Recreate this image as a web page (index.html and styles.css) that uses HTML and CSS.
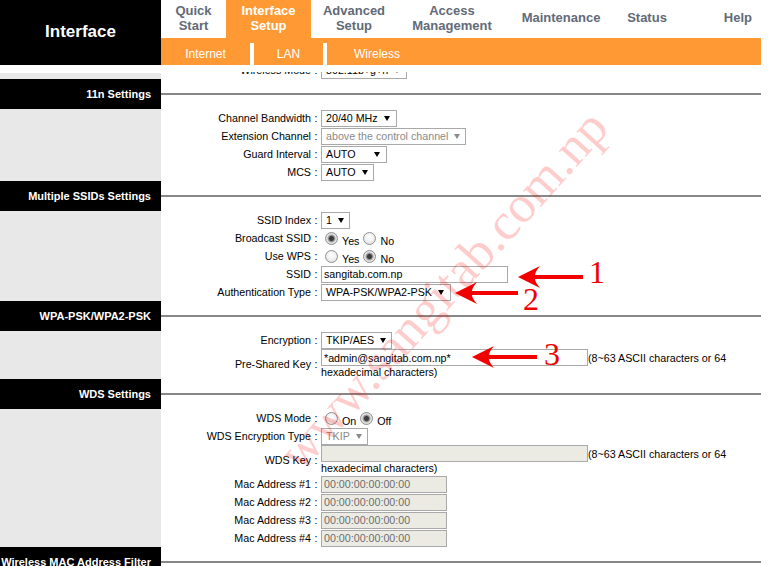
FILE: index.html
```html
<!DOCTYPE html>
<html>
<head>
<meta charset="utf-8">
<title>Interface Setup - Wireless</title>
<link rel="stylesheet" href="styles.css">
</head>
<body>
<div class="page">
  <header class="top">
    <div class="brand">Interface</div>
    <nav class="nav">
      <ul class="tabs">
        <li class="tab t1">Quick<br>Start</li>
        <li class="tab t2 active">Interface<br>Setup</li>
        <li class="tab t3">Advanced<br>Setup</li>
        <li class="tab t4">Access<br>Management</li>
        <li class="tab t5">Maintenance</li>
        <li class="tab t6">Status</li>
        <li class="tab t7">Help</li>
      </ul>
      <ul class="subtabs">
        <li class="sub s1">Internet</li>
        <li class="sep"></li>
        <li class="sub s2">LAN</li>
        <li class="sep"></li>
        <li class="sub s3">Wireless</li>
      </ul>
    </nav>
  </header>

  <div class="viewport">
    <div class="scroll">
      <div class="sec-body">
        <div class="side partial"></div>
        <div class="rows">
          <div class="row"><span class="lbl">Wireless Mode</span><span class="colon">:</span><span class="ctl"><span class="sel w86">802.11b+g+n</span></span></div>
        </div>
      </div>

      <div class="sec-head"><div class="sh-label">11n Settings</div><div class="sh-rule"></div></div>
      <div class="sec-body">
        <div class="side"></div>
        <div class="rows">
          <div class="row"><span class="lbl">Channel Bandwidth</span><span class="colon">:</span><span class="ctl"><span class="sel w76">20/40 MHz</span></span></div>
          <div class="row"><span class="lbl">Extension Channel</span><span class="colon">:</span><span class="ctl"><span class="sel dis w145">above the control channel</span></span></div>
          <div class="row"><span class="lbl">Guard Interval</span><span class="colon">:</span><span class="ctl"><span class="sel w66">AUTO</span></span></div>
          <div class="row"><span class="lbl">MCS</span><span class="colon">:</span><span class="ctl"><span class="sel w53">AUTO</span></span></div>
        </div>
      </div>

      <div class="sec-head"><div class="sh-label">Multiple SSIDs Settings</div><div class="sh-rule"></div></div>
      <div class="sec-body">
        <div class="side"></div>
        <div class="rows">
          <div class="row"><span class="lbl">SSID Index</span><span class="colon">:</span><span class="ctl"><span class="sel w29">1</span></span></div>
          <div class="row"><span class="lbl">Broadcast SSID</span><span class="colon">:</span><span class="ctl"><input class="radio" type="radio" name="bc" checked><span class="rt">Yes</span><input class="radio" type="radio" name="bc"><span class="rt">No</span></span></div>
          <div class="row"><span class="lbl">Use WPS</span><span class="colon">:</span><span class="ctl"><input class="radio" type="radio" name="wps"><span class="rt">Yes</span><input class="radio" type="radio" name="wps" checked><span class="rt">No</span></span></div>
          <div class="row"><span class="lbl">SSID</span><span class="colon">:</span><span class="ctl"><input class="inp w187" type="text" value="sangitab.com.np"></span></div>
          <div class="row"><span class="lbl">Authentication Type</span><span class="colon">:</span><span class="ctl"><span class="sel w130">WPA-PSK/WPA2-PSK</span></span></div>
        </div>
      </div>

      <div class="sec-head"><div class="sh-label">WPA-PSK/WPA2-PSK</div><div class="sh-rule"></div></div>
      <div class="sec-body">
        <div class="side"></div>
        <div class="rows">
          <div class="row"><span class="lbl">Encryption</span><span class="colon">:</span><span class="ctl"><span class="sel w71">TKIP/AES</span></span></div>
          <div class="row tall"><span class="lbl">Pre-Shared Key</span><span class="colon">:</span>
            <div class="ctl-block">
              <div class="line1"><input class="inp w267" type="text" value="*admin@sangitab.com.np*"><span class="note">(8~63 ASCII characters or 64</span></div>
              <div class="line2">hexadecimal characters)</div>
            </div>
          </div>
        </div>
      </div>

      <div class="sec-head"><div class="sh-label">WDS Settings</div><div class="sh-rule"></div></div>
      <div class="sec-body">
        <div class="side"></div>
        <div class="rows">
          <div class="row"><span class="lbl">WDS Mode</span><span class="colon">:</span><span class="ctl"><input class="radio" type="radio" name="wds"><span class="rt">On</span><input class="radio" type="radio" name="wds" checked><span class="rt">Off</span></span></div>
          <div class="row"><span class="lbl">WDS Encryption Type</span><span class="colon">:</span><span class="ctl"><span class="sel dis w47">TKIP</span></span></div>
          <div class="row tall"><span class="lbl">WDS Key</span><span class="colon">:</span>
            <div class="ctl-block">
              <div class="line1"><input class="inp dis w267" type="text" value="" readonly><span class="note">(8~63 ASCII characters or 64</span></div>
              <div class="line2">hexadecimal characters)</div>
            </div>
          </div>
          <div class="row"><span class="lbl">Mac Address #1</span><span class="colon">:</span><span class="ctl"><input class="inp dis w126" type="text" value="00:00:00:00:00:00" readonly></span></div>
          <div class="row"><span class="lbl">Mac Address #2</span><span class="colon">:</span><span class="ctl"><input class="inp dis w126" type="text" value="00:00:00:00:00:00" readonly></span></div>
          <div class="row"><span class="lbl">Mac Address #3</span><span class="colon">:</span><span class="ctl"><input class="inp dis w126" type="text" value="00:00:00:00:00:00" readonly></span></div>
          <div class="row"><span class="lbl">Mac Address #4</span><span class="colon">:</span><span class="ctl"><input class="inp dis w126" type="text" value="00:00:00:00:00:00" readonly></span></div>
        </div>
      </div>

      <div class="sec-head"><div class="sh-label">Wireless MAC Address Filter</div><div class="sh-rule"></div></div>
    </div>
  </div>

  <div class="wm">www.sangitab.com.np</div>
  <svg class="arrows" width="780" height="566" viewBox="0 0 780 566" aria-hidden="true">
    <path transform="translate(518 277)" d="M0 0 Q10 -5 22 -11 Q17 -5 17 -2 H65 V2 H17 Q17 5 22 11 Q10 5 0 0Z"/>
    <path transform="translate(455 293)" d="M0 0 Q10 -5 22 -11 Q17 -5 17 -2 H63 V2 H17 Q17 5 22 11 Q10 5 0 0Z"/>
    <path transform="translate(472 357)" d="M0 0 Q10 -5 22 -11 Q17 -5 17 -2 H65 V2 H17 Q17 5 22 11 Q10 5 0 0Z"/>
  </svg>
  <span class="num n1">1</span>
  <span class="num n2">2</span>
  <span class="num n3">3</span>
</div>
</body>
</html>
```
FILE: styles.css
```css
* { box-sizing: border-box; margin: 0; padding: 0; }
body { margin: 0; background: #fff; font-family: "Liberation Sans", Arial, sans-serif; overflow: hidden; }
.page { position: relative; width: 780px; height: 566px; overflow: hidden; background: #fff; }

/* header */
.top { display: flex; width: 761px; height: 65px; margin-bottom: 7px; }
.brand { width: 161px; background: #000; color: #fff; font-weight: bold; font-size: 17px; display: flex; align-items: center; justify-content: center; padding-bottom: 1px; }
.nav { width: 600px; display: flex; flex-direction: column; }
.tabs { display: flex; height: 38px; list-style: none; }
.tab { display: flex; align-items: center; justify-content: center; text-align: center; font-weight: bold; font-size: 13px; line-height: 15px; color: #626a78; padding-bottom: 3px; white-space: nowrap; }
.tab.active { background: #ff9933; color: #fff; }
.t1 { width: 65px; }
.t2 { width: 85px; }
.t3 { width: 86px; }
.t4 { width: 110px; }
.t5 { width: 108px; }
.t6 { width: 64px; }
.t7 { width: 82px; justify-content: flex-end; padding-right: 9px; }
.subtabs { display: flex; align-items: flex-end; height: 27px; background: #ff9933; list-style: none; }
.sub { height: 22px; line-height: 20px; padding-top: 1px; text-align: center; color: #fff; font-size: 12px; }
.s1 { width: 89px; }
.s2 { width: 69px; }
.s3 { width: 100px; }
.sep { width: 4px; height: 22px; background: #fff; }

/* content */
.viewport { width: 761px; height: 494px; overflow: hidden; }
.scroll { margin-top: -11px; }
.sec-head { display: grid; grid-template-columns: 161px 600px; height: 30px; }
.sh-label { background: #000; color: #fff; font-weight: bold; font-size: 11px; display: flex; align-items: center; justify-content: flex-end; padding-right: 10px; white-space: nowrap; }
.sh-rule { display: flex; align-items: center; }
.sh-rule::before { content: ""; display: block; width: 100%; height: 2px; background: #888; }
.sec-body { display: grid; grid-template-columns: 161px 600px; }
.side { background: #e8e8e8; }
.side.partial { background: linear-gradient(to bottom, #fff 0, #fff 12px, #e8e8e8 12px); }
.rows { font-size: 10.7px; color: #000; }
.row { display: grid; grid-template-columns: 150px 10px 440px; align-items: center; height: 18px; }
.row.tall { height: 30px; }
.lbl { text-align: right; white-space: nowrap; }
.colon { text-align: center; }
.ctl { display: flex; align-items: center; height: 18px; }
.ctl-block { display: flex; flex-direction: column; }
.line1 { display: flex; align-items: center; height: 17px; }
.line2 { line-height: 13px; height: 13px; white-space: nowrap; }
.note { white-space: nowrap; }

/* select look-alike */
.sel { display: flex; align-items: center; justify-content: space-between; height: 17px; border: 1px solid #a9a9a9; background: #fff; padding: 0 6px 0 4px; white-space: nowrap; color: #000; }
.sel::after { content: ""; display: block; width: 0; height: 0; border-left: 3px solid transparent; border-right: 3px solid transparent; border-top: 5px solid #000; margin-left: 6px; }
.sel.dis { color: #8a8a8a; }
.sel.dis::after { border-top-color: #8a8a8a; }
.w29 { width: 29px; }
.w47 { width: 47px; }
.w53 { width: 53px; }
.w66 { width: 66px; }
.w71 { width: 71px; }
.w76 { width: 76px; }
.w86 { width: 86px; }
.w126 { width: 126px; }
.w130 { width: 130px; }
.w145 { width: 145px; }
.w187 { width: 187px; }
.w267 { width: 267px; }

/* text inputs */
.inp { height: 17px; border: 1px solid #a9a9a9; font-family: "Liberation Sans", Arial, sans-serif; font-size: 10.7px; padding: 0 2px; color: #000; background: #fff; outline: none; }
.inp.dis { background: #ebebe4; color: #6d6d6d; }

/* radios */
.radio { -webkit-appearance: none; appearance: none; width: 13px; height: 13px; border: 1px solid #909090; border-radius: 50%; margin: 0 4px; background: radial-gradient(circle at 50% 40%, #ffffff 0, #f2f2f2 45%, #d6d6d6 100%); flex: none; }
.radio:checked { background: radial-gradient(circle, #3c3c3c 0, #3c3c3c 2px, #8c8c8c 3px, #e4e4e4 4.5px, #d4d4d4 100%); }
.rt { padding-top: 6px; }

/* overlays */
.wm { position: absolute; left: 210px; top: 264px; width: 466px; height: 52px; line-height: 52px; text-align: center; font-family: "Liberation Serif", "Times New Roman", serif; font-size: 52px; color: rgba(255, 0, 0, 0.2); white-space: nowrap; transform: rotate(-48deg); pointer-events: none; }
.arrows { position: absolute; left: 0; top: 0; fill: #f20000; pointer-events: none; }
.num { position: absolute; font-family: "Liberation Serif", "Times New Roman", serif; font-size: 32px; line-height: 32px; color: #f20000; }
.n1 { left: 589px; top: 256px; }
.n2 { left: 523px; top: 283px; }
.n3 { left: 544px; top: 338px; }
```
